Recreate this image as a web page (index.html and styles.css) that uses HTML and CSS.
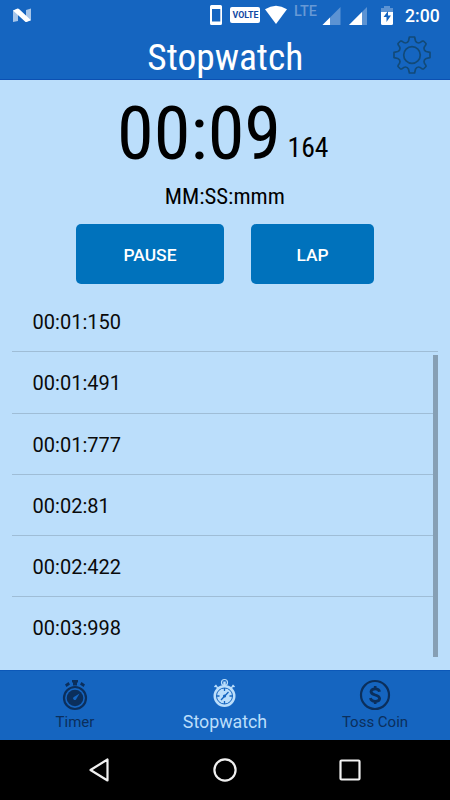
FILE: index.html
```html
<!DOCTYPE html>
<html lang="en">
<head>
<meta charset="utf-8">
<title>Stopwatch</title>
<link rel="stylesheet" href="styles.css">
</head>
<body>
<div class="app">
  <header class="top">
    <div class="status">
      <svg class="status-n" width="20" height="16" viewBox="0 0 20 16"><path d="M1 2.500 6 1v12L1 14zM14 2l5-1.500V12l-5 2z" fill="#a6c5e9"/><path d="M1 2.500 5 .8Q6 .2 7 1L19 12.200l-4 1.600q-1.200.4-2-.4z" fill="#fff"/></svg>
      <svg class="status-icons" width="175" height="28" viewBox="204 0 175 28">
        <path fill="#fff" fill-rule="evenodd" d="M211.500 5h9a1.500 1.500 0 0 1 1.500 1.500v17a1.500 1.500 0 0 1-1.500 1.500h-9a1.500 1.500 0 0 1-1.500-1.500v-17a1.500 1.500 0 0 1 1.500-1.500zM212 9v12.500h8.300V9z"/>
        <rect x="230" y="7" width="30" height="16" rx="2" fill="#fff"/>
        <text x="232.500" y="18.300" textLength="26" lengthAdjust="spacingAndGlyphs" class="volte">VOLTE</text>
        <path fill="#fff" d="M265 9.300q11-7 22 0L276 24z"/>
        <text x="294" y="16" textLength="23" lengthAdjust="spacingAndGlyphs" class="lte">LTE</text>
        <path fill="#5c93d3" d="M340.500 7v18H322.500z"/><path fill="#fff" d="M330 17.500V25h-7.500z"/>
        <path fill="#5c93d3" d="M367 7v18H349z"/><path fill="#fff" d="M362 12v13h-13z"/>
      </svg>
      <svg class="battery" width="12" height="19" viewBox="0 0 12 19"><path fill="#5c93d3" d="M0 7V2h3V0h6v2h3v5z"/><path fill="#fff" d="M0 6h12v11.500Q12 19 10.500 19h-9Q0 19 0 17.500z"/><path fill="#1565c0" d="M7 5 2.500 11h3V16L10 9.500H7z"/></svg>
      <span class="clock">2:00</span>
    </div>
    <div class="title-row">
      <svg class="title" width="160" height="46" viewBox="145 34 160 46"><text x="147.300" y="70" textLength="156" lengthAdjust="spacingAndGlyphs">Stopwatch</text></svg>
      <svg class="gear" width="40" height="40" viewBox="-20 -20 40 40" fill="none" stroke="#124a78" stroke-width="1.700" stroke-linejoin="round"><circle r="8.300"/><path d="M-2.600-18H2.600L3.500-14.200Q4.500-12 6.500-12Q8-12 10.200-13.800L11.500-14L14-11.500L13.800-10.200Q12-8 12-6.500Q12-4.500 14.200-3.500L18-2.600V2.600L14.200 3.500Q12 4.500 12 6.500Q12 8 13.800 10.200L14 11.500L11.500 14L10.200 13.800Q8 12 6.500 12Q4.500 12 3.500 14.200L2.600 18H-2.600L-3.500 14.200Q-4.500 12-6.500 12Q-8 12-10.200 13.800L-11.500 14L-14 11.500L-13.800 10.200Q-12 8-12 6.500Q-12 4.500-14.200 3.500L-18 2.600V-2.600L-14.200-3.500Q-12-4.500-12-6.500Q-12-8-13.800-10.200L-14-11.500L-11.500-14L-10.200-13.800Q-8-12-6.500-12Q-4.500-12-3.500-14.200Z"/></svg>
    </div>
  </header>

  <main class="content">
    <svg class="time" width="230" height="134" viewBox="110 80 230 134">
      <text class="big" x="117" y="159.300" textLength="164" lengthAdjust="spacingAndGlyphs">00:09</text>
      <text class="ms" x="287.500" y="157.300" textLength="41" lengthAdjust="spacingAndGlyphs">164</text>
      <text class="unit" x="164.800" y="204.200" textLength="120" lengthAdjust="spacingAndGlyphs">MM:SS:mmm</text>
    </svg>
    <div class="buttons">
      <button class="btn pause">PAUSE</button>
      <button class="btn lap">LAP</button>
    </div>
    <div class="laps">
      <div class="lap-row">00:01:150</div>
      <div class="lap-row">00:01:491</div>
      <div class="lap-row">00:01:777</div>
      <div class="lap-row">00:02:81</div>
      <div class="lap-row">00:02:422</div>
      <div class="lap-row">00:03:998</div>
      <div class="thumb"></div>
    </div>
  </main>

  <nav class="tabs">
    <div class="tab">
      <svg width="30" height="34" viewBox="60 678 30 34"><g fill="#0b2f5c"><path d="M72 680h6v2.500h-1v3h-4v-3h-1zM65 684.500l3.500-2.500 1.500 2.500-3.500 2.500zM85 684.500l-3.500-2.500-1.500 2.500 3.500 2.500z"/><circle cx="75" cy="698" r="8.300"/></g><circle cx="75" cy="698" r="11" fill="none" stroke="#0b2f5c" stroke-width="2.200"/><path d="m79.500 693.500-3.500 6a1.700 1.700 0 0 1-2.500-2.300z" fill="#1565c0"/></svg>
      <span>Timer</span>
    </div>
    <div class="tab active">
      <svg width="30" height="34" viewBox="210 678 30 34"><g fill="none" stroke="#bbdefb"><circle cx="224.500" cy="682.500" r="3" stroke-width="1.200"/><path d="M224.500 681.500v5" stroke-width="2.500"/><path d="m214.500 687 2-2m-.8.800 2.500 2.500M234.500 687l-2-2m.8.800-2.500 2.500" stroke-width="1.500"/></g><circle cx="224.500" cy="696" r="11" fill="#bbdefb"/><g fill="none" stroke="#1565c0"><circle cx="224.500" cy="696" r="8" stroke-width="1"/><path d="M224.500 688v3M224.500 701v3M216.500 696h3M229.500 696h3M221 700l7.500-8" stroke-width="1.300"/></g><circle cx="224.500" cy="696" r="1.600" fill="#1565c0"/></svg>
      <span>Stopwatch</span>
    </div>
    <div class="tab">
      <svg width="32" height="34" viewBox="359 678 32 34" fill="none" stroke="#0b2f5c"><circle cx="375" cy="695" r="14" stroke-width="2.200"/><path d="M379.500 691.800Q379 688.800 375.200 688.800T371 691.600Q371 693.900 375.200 695T379.600 698.500Q379.600 701.300 375.300 701.300T370.500 698" stroke-width="2.800"/><path d="M375.200 686v3M375.200 701v3" stroke-width="2.600"/></svg>
      <span>Toss Coin</span>
    </div>
  </nav>

  <footer class="sysnav">
    <svg width="24" height="26" viewBox="-12 -13 24 26"><path d="M7.500-10.500v21L-9.500 0z"/></svg>
    <svg width="26" height="26" viewBox="-13 -13 26 26"><circle r="10.600"/></svg>
    <svg width="24" height="26" viewBox="-12 -13 24 26"><rect x="-9.500" y="-9.500" width="19" height="19" rx="1"/></svg>
  </footer>
</div>
</body>
</html>
```
FILE: styles.css
```css
* { box-sizing: border-box; }
body { margin: 0; font-family: Roboto, "Liberation Sans", sans-serif; }
svg { display: block; flex: none; }
.app { width: 450px; height: 800px; display: flex; flex-direction: column; overflow: hidden; background: #bbdefb; }
.top { height: 80px; background: #1565c0; border-bottom: 1px solid #0c50b2; }
.status { height: 34px; display: flex; align-items: flex-start; }
.status-n { margin: 8px 0 0 12px; }
.status-icons { margin-left: 172px; }
.battery { margin: 6px 0 0 2px; }
.clock { margin: 5px 0 0 12px; font-size: 17.600px; line-height: 22px; font-weight: 500; color: #fff; white-space: nowrap; }
.volte { font: 700 9.500px Roboto, sans-serif; fill: #1148a4; }
.lte { font: 500 14px Roboto, sans-serif; fill: #6799d5; }
.title-row { display: flex; height: 45px; padding-left: 145px; }
.title text, .time text { font-family: "Roboto Condensed", Roboto, sans-serif; font-stretch: 75%; }
.title text { font-size: 37px; fill: #fff; }
.gear { margin: 1px 0 0 87px; }
.content { height: 590px; padding-left: 12px; }
.time { margin-left: 98px; }
.time text { fill: #000; }
.time .big { font-size: 75px; }
.time .ms { font-size: 27px; }
.time .unit { font-size: 22.500px; }
.buttons { display: flex; gap: 27px; margin: 10px 0 0 64px; }
.btn { height: 60px; padding: 1px 0 0; border: 0; border-radius: 5px; background: #0072bc; color: #fff; font: 500 17.400px Roboto, sans-serif; }
.pause { width: 148px; }
.lap { width: 123px; }
.laps { position: relative; width: 426px; margin-top: 7px; }
.lap-row { height: 61.250px; padding-left: 20.600px; border-bottom: 1px solid #9fbdd6; font-size: 20px; line-height: 62px; color: #0a0a0a; }
.lap-row:nth-child(6) { border-bottom: 0; }
.thumb { position: absolute; right: 0; top: 64px; width: 5px; height: 302px; background: #869fb4; }
.tabs { height: 70px; display: flex; background: #1565c0; border-top: 1px solid #0c58b8; }
.tab { flex: 1; display: flex; flex-direction: column; align-items: center; padding-top: 7px; font-size: 15px; line-height: 20px; color: #0b2f5c; }
.active { font-size: 17.800px; color: #bbdefb; }
.sysnav { height: 60px; display: flex; align-items: center; justify-content: space-between; padding: 0 88px; background: #000; }
.sysnav svg { fill: none; stroke: #f0f0f0; stroke-width: 2.200; stroke-linejoin: round; }
```
